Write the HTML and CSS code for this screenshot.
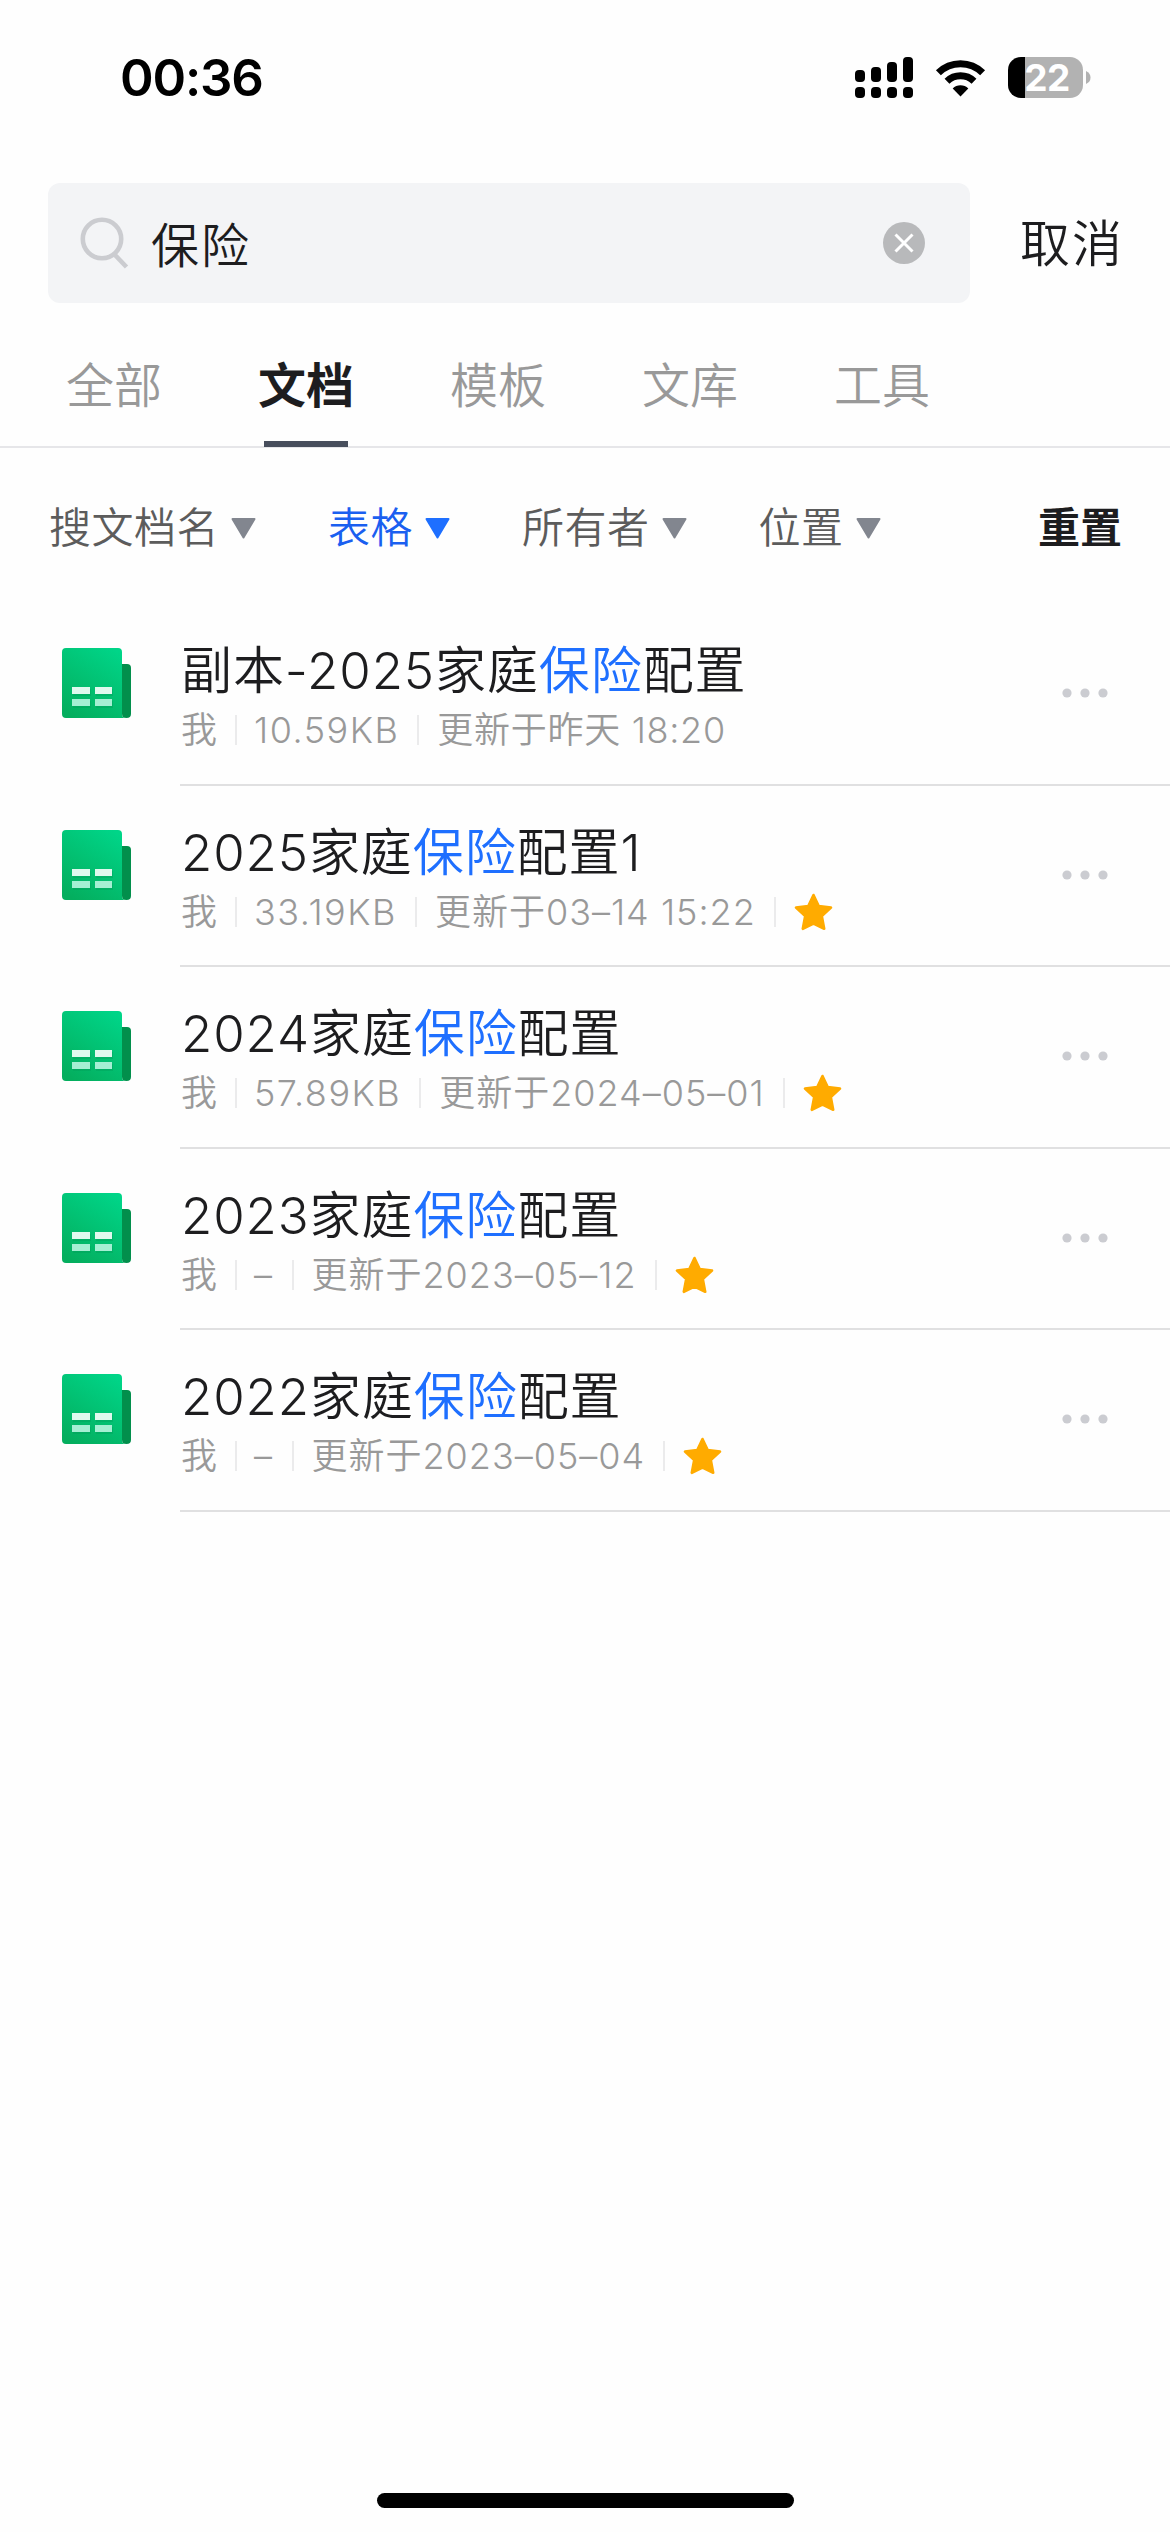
FILE: index.html
```html
<!DOCTYPE html>
<html lang="zh-CN">
<head>
<meta charset="utf-8">
<title>保险</title>
<link rel="stylesheet" href="styles.css">
</head>
<body>
<svg class="defs" width="0" height="0" aria-hidden="true">
  <defs>
    <linearGradient id="sheet-fill" x1="0.8" y1="0" x2="0.2" y2="1">
      <stop offset="0" stop-color="#00d588"/>
      <stop offset="1" stop-color="#04ae5e"/>
    </linearGradient>
    <symbol id="sheet" viewBox="0 0 69 70">
      <path d="M4 0h52q4 0 4 4v62q0 4 4 4H4q-4 0-4-4V4q0-4 4-4z" fill="url(#sheet-fill)"/>
      <path d="M60 16h5q4 0 4 4v46q0 4-4.500 4t-4.500-4z" fill="#028f4c"/>
      <path d="M11 41h18v7H11zM34 41h17v7H34zM11 53h18v7H11zM34 53h17v7H34z" fill="#009c55" opacity=".35"/>
      <path d="M10 39h18v7H10zM33 39h17v7H33z" fill="#dff9ee"/>
      <path d="M10 51h18v7H10zM33 51h17v7H33z" fill="#a5efd3"/>
    </symbol>
    <symbol id="star" viewBox="0 0 39 38">
      <path d="M19.500 2l5.200 11 12.300 1.600-9.200 8.400 2.400 12.800-10.700-5.200-10.700 5.200 2.400-12.800L2 14.600 14.300 13z" fill="#ffab00" stroke="#ffab00" stroke-width="2.600" stroke-linejoin="round"/>
    </symbol>
    <symbol id="more" viewBox="0 0 46 10">
      <circle cx="5" cy="5" r="4.600"/><circle cx="23" cy="5" r="4.600"/><circle cx="41" cy="5" r="4.600"/>
    </symbol>
    <symbol id="caret" viewBox="0 0 25 21">
      <path d="M1.500 1h22L12.500 19.500z" stroke-width="2" stroke-linejoin="round"/>
    </symbol>
  </defs>
</svg>
<div class="screen">
  <header class="status">
    <span class="time">00:36</span>
    <div class="status-icons">
      <svg class="signal" width="58" height="41" viewBox="0 0 58 41">
        <rect x="0" y="13" width="10" height="12" rx="4"/><rect x="16" y="10" width="10" height="15" rx="4"/>
        <rect x="32" y="5" width="10" height="20" rx="4"/><rect x="48" y="0" width="10" height="25" rx="4"/>
        <rect x="0" y="30" width="10" height="11" rx="4"/><rect x="16" y="30" width="10" height="11" rx="4"/>
        <rect x="32" y="30" width="10" height="11" rx="4"/><rect x="48" y="30" width="10" height="11" rx="4"/>
      </svg>
      <svg class="wifi" width="51" height="38" viewBox="0 0 51 38">
        <path d="M3.400 13.700a31.500 31.500 0 0 1 44.200 0M12 22.200a19.400 19.400 0 0 1 27 0" fill="none" stroke="#000" stroke-width="7"/>
        <path d="M25.500 37.500l-7.800-8a11 11 0 0 1 15.600 0z"/>
      </svg>
      <div class="battery"><div class="cell">22</div><svg width="5" height="13" viewBox="0 0 5 13"><path d="M0 0q4.500 2 4.500 6.500T0 13z" fill="#b2b2b2"/></svg></div>
    </div>
  </header>

  <div class="search-row">
    <div class="search-box">
      <svg class="glass" width="50" height="52" viewBox="0 0 50 52"><circle cx="22" cy="22" r="19.200"/><path d="M34.500 37.500l12 12.500"/></svg>
      <span class="query">保险</span>
      <svg class="clear" width="42" height="42" viewBox="0 0 42 42"><circle cx="21" cy="21" r="21" fill="#b8b9bb"/><path d="M12.500 12.500l17 17M29.500 12.500l-17 17" stroke="#fff" stroke-width="3"/></svg>
    </div>
    <span class="cancel">取消</span>
  </div>

  <nav class="tabs">
    <span class="tab">全部</span><span class="tab active">文档</span><span class="tab">模板</span><span class="tab">文库</span><span class="tab">工具</span>
  </nav>

  <div class="filters">
    <div class="filter">搜文档名<svg class="caret"><use href="#caret"/></svg></div>
    <div class="filter on">表格<svg class="caret"><use href="#caret"/></svg></div>
    <div class="filter">所有者<svg class="caret"><use href="#caret"/></svg></div>
    <div class="filter">位置<svg class="caret"><use href="#caret"/></svg></div>
    <span class="reset">重置</span>
  </div>

  <main class="list">
    <article class="row">
      <svg class="sheet"><use href="#sheet"/></svg>
      <div class="body"><div class="info">
        <div class="title">副本-2025家庭<em>保险</em>配置</div>
        <div class="meta"><span>我</span><span class="size">10.59KB</span><span class="date">更新于昨天 18:20</span></div>
      </div><svg class="more"><use href="#more"/></svg></div>
    </article>
    <article class="row">
      <svg class="sheet"><use href="#sheet"/></svg>
      <div class="body"><div class="info">
        <div class="title">2025家庭<em>保险</em>配置1</div>
        <div class="meta"><span>我</span><span class="size">33.19KB</span><span class="date full">更新于03–14 15:22</span><span><svg class="star"><use href="#star"/></svg></span></div>
      </div><svg class="more"><use href="#more"/></svg></div>
    </article>
    <article class="row">
      <svg class="sheet"><use href="#sheet"/></svg>
      <div class="body"><div class="info">
        <div class="title">2024家庭<em>保险</em>配置</div>
        <div class="meta"><span>我</span><span class="size">57.89KB</span><span class="date full">更新于2024–05–01</span><span><svg class="star"><use href="#star"/></svg></span></div>
      </div><svg class="more"><use href="#more"/></svg></div>
    </article>
    <article class="row">
      <svg class="sheet"><use href="#sheet"/></svg>
      <div class="body"><div class="info">
        <div class="title">2023家庭<em>保险</em>配置</div>
        <div class="meta"><span>我</span><span class="size">–</span><span class="date full">更新于2023–05–12</span><span><svg class="star"><use href="#star"/></svg></span></div>
      </div><svg class="more"><use href="#more"/></svg></div>
    </article>
    <article class="row">
      <svg class="sheet"><use href="#sheet"/></svg>
      <div class="body"><div class="info">
        <div class="title">2022家庭<em>保险</em>配置</div>
        <div class="meta"><span>我</span><span class="size">–</span><span class="date full">更新于2023–05–04</span><span><svg class="star"><use href="#star"/></svg></span></div>
      </div><svg class="more"><use href="#more"/></svg></div>
    </article>
  </main>
  <div class="home-bar"></div>
</div>
</body>
</html>
```
FILE: styles.css
```css
* { box-sizing: border-box; }
body {
  margin: 0;
  background: #fefefe;
  color: #1d1d1f;
  font-family: Inter, "Noto Sans CJK SC", sans-serif;
  font-weight: 350;
}
svg { display: block; flex: none; }
.defs { position: absolute; }
.screen { width: 1170px; height: 2532px; display: flex; flex-direction: column; overflow: hidden; white-space: nowrap; }

.status { height: 183px; padding: 47px 79px 0 120px; display: flex; justify-content: space-between; align-items: flex-start; color: #000; }
.time { font-size: 51px; line-height: 62px; font-weight: 600; letter-spacing: -1.200px; }
.status-icons { display: flex; align-items: flex-start; padding-top: 10px; }
.wifi { margin: 2px 0 0 22px; }
.battery { display: flex; align-items: center; gap: 3px; margin-left: 22px; }
.cell {
  width: 75px; height: 41px; border-radius: 13px; padding-left: 3px;
  background: linear-gradient(90deg, #000 17px, #b2b2b2 17px);
  color: #fff; font-size: 37px; line-height: 41px; font-weight: 700; text-align: center; letter-spacing: -0.5px;
}

.search-row { display: flex; align-items: center; height: 120px; padding-left: 48px; }
.search-box { width: 922px; height: 120px; border-radius: 12px; background: #f3f4f6; display: flex; align-items: center; padding: 0 45px 0 32px; }
.glass { fill: none; stroke: #cbccd0; stroke-width: 4.600; }
.query { font-size: 48px; letter-spacing: 2px; margin-left: 21px; flex: 1; line-height: 60px; padding-top: 6px; }
.cancel { font-size: 50px; letter-spacing: 2px; margin-left: 50px; line-height: 60px; padding-top: 1px; }

.tabs { height: 145px; border-bottom: 2px solid #e6e6e9; display: flex; padding-left: 66px; gap: 96px; }
.tab { width: 96px; height: 144px; flex: none; font-size: 48px; line-height: 60px; padding-top: 53px; color: #999; position: relative; }
.active { color: #1d1d1f; font-weight: 700; }
.active::after { content: ""; position: absolute; left: 6px; bottom: 0; width: 84px; height: 6px; background: #474e5c; }

.filters { display: flex; align-items: center; height: 156px; padding: 3px 48px 0 49px; color: #5c5c5c; font-size: 42px; line-height: 60px; }
.filter { display: flex; align-items: center; margin-right: 72px; letter-spacing: 0.500px; }
.caret { width: 25px; height: 21px; margin: 1px 0 0 12px; fill: #82868f; stroke: #82868f; }
.on { color: #1a5ff0; }
.on .caret { fill: #1e6fff; stroke: #1e6fff; }
.reset { margin-left: auto; color: #1d1d1f; font-weight: 700; }

.row { height: 181.500px; padding-left: 62px; display: flex; }
.sheet { width: 69px; height: 70px; margin: 44px 49px 0 0; }
.body { flex: 1; display: flex; border-bottom: 2px solid #e0e0e1; justify-content: space-between; }
.info { padding: 36px 0 0 1px; }
.title { font-size: 51px; line-height: 62px; letter-spacing: 0.900px; }
.title em { font-style: normal; color: #1e6fff; }
.meta { display: flex; align-items: center; margin-top: 8px; height: 40px; font-size: 36px; line-height: 40px; color: #999; }
.meta > * + * { margin-left: 18px; }
.meta span { display: flex; align-items: center; white-space: pre; }
.meta span:not(:first-child)::before { content: ""; width: 2px; height: 30px; background: #ebebec; margin-right: 18px; }
.meta .size { letter-spacing: 1.500px; }
.meta .size:not(:first-child)::before { margin-right: 17px; }
.meta .date { letter-spacing: 0.700px; }
.meta .full { letter-spacing: 1px; }
.star { width: 39px; height: 38px; }
.more { width: 46px; height: 10px; margin: 84px 62px 0 0; fill: #cbccd1; }
.home-bar { width: 417px; height: 15px; border-radius: 8px; background: #000; margin: auto auto 24px; }
```
